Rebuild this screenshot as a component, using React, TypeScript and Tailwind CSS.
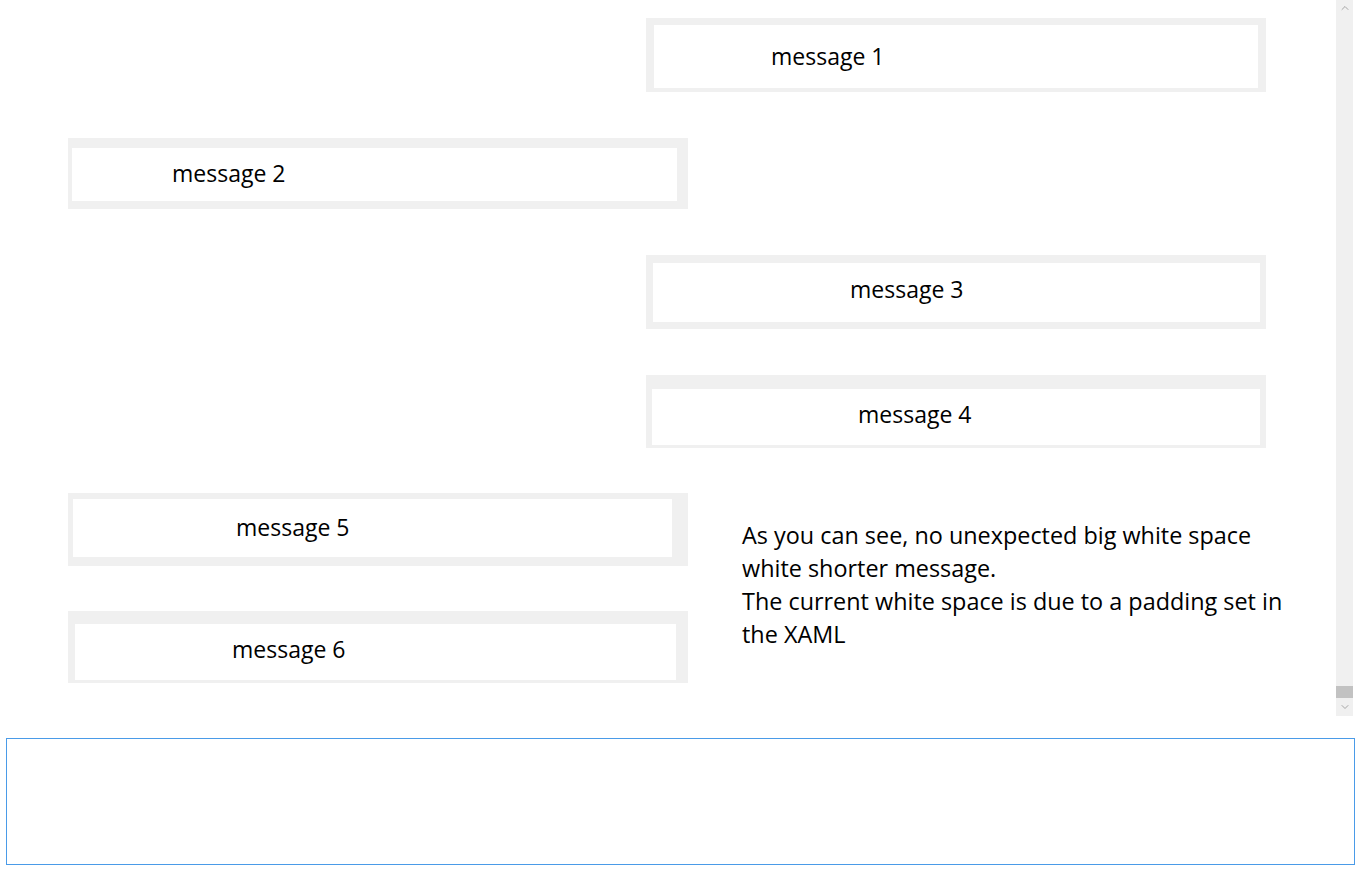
import { ChevronUp, ChevronDown } from 'lucide-react'

type Msg = {
  text: string
  side: 'left' | 'right'
  box: string
  pad: string
  gap: string
}

const messages: Msg[] = [
  { text: 'message 1', side: 'right', box: 'h-[74px] border-l-[8px] border-t-[7px] border-r-[8px] border-b-[4px]', pad: 'pl-[117px]', gap: 'mt-[18px]' },
  { text: 'message 2', side: 'left', box: 'h-[71px] border-l-[4px] border-t-[10px] border-r-[11px] border-b-[8px]', pad: 'pl-[100px] pb-[2px]', gap: 'mt-[46px]' },
  { text: 'message 3', side: 'right', box: 'h-[74px] border-l-[7px] border-t-[8px] border-r-[6px] border-b-[7px]', pad: 'pl-[197px] pb-[6px]', gap: 'mt-[46px]' },
  { text: 'message 4', side: 'right', box: 'h-[73px] border-l-[6px] border-t-[14px] border-r-[6px] border-b-[3px]', pad: 'pl-[206px] pb-[6px]', gap: 'mt-[46px]' },
]

const lower: Msg[] = [
  { text: 'message 5', side: 'left', box: 'h-[73px] border-l-[5px] border-t-[6px] border-r-[16px] border-b-[9px]', pad: 'pl-[163px] pb-[2px]', gap: 'mt-0' },
  { text: 'message 6', side: 'left', box: 'h-[72px] border-l-[7px] border-t-[13px] border-r-[12px] border-b-[3px]', pad: 'pl-[157px] pb-[6px]', gap: 'mt-[45px]' },
]

function Bubble({ m }: { m: Msg }) {
  return (
    <div
      className={`w-[620px] border-[#f0f0f0] bg-white flex items-center text-[23px] text-black ${m.box} ${m.pad}`}
    >
      {m.text}
    </div>
  )
}

export default function App() {
  return (
    <div
      className="w-[1357px] h-[875px] bg-white flex flex-col"
      style={{ fontFamily: '"Open Sans", "Noto Sans", sans-serif' }}
    >
      <div className="h-[716px] flex">
        <div className="flex-1 flex flex-col">
          {messages.map((m) => (
            <div
              key={m.text}
              className={`flex ${m.gap} ${m.side === 'right' ? 'pl-[646px]' : 'pl-[68px]'}`}
            >
              <Bubble m={m} />
            </div>
          ))}
          <div className="flex mt-[45px] pl-[68px]">
            <div className="flex flex-col">
              {lower.map((m) => (
                <div key={m.text} className={m.gap}>
                  <Bubble m={m} />
                </div>
              ))}
            </div>
            <div className="ml-[54px] mt-[26px] w-[548px] text-[23.4px] leading-[33px] text-black">
              As you can see, no unexpected big white space white shorter message.
              <br />
              The current white space is due to a padding set in the XAML
            </div>
          </div>
        </div>
        <div className="w-[17px] mr-[4px] bg-[#f0f0f0] flex flex-col items-center">
          <ChevronUp className="w-[12px] h-[12px] mt-[2px] text-[#8c8c8c]" strokeWidth={1.5} />
          <div className="flex-1" />
          <div className="w-[17px] h-[12px] bg-[#c2c2c2]" />
          <ChevronDown className="w-[12px] h-[12px] mt-[3px] mb-[3px] text-[#8c8c8c]" strokeWidth={1.5} />
        </div>
      </div>
      <div className="mt-[22px] ml-[6px] w-[1349px] h-[127px] border border-[#4a9be8] bg-white" />
    </div>
  )
}
